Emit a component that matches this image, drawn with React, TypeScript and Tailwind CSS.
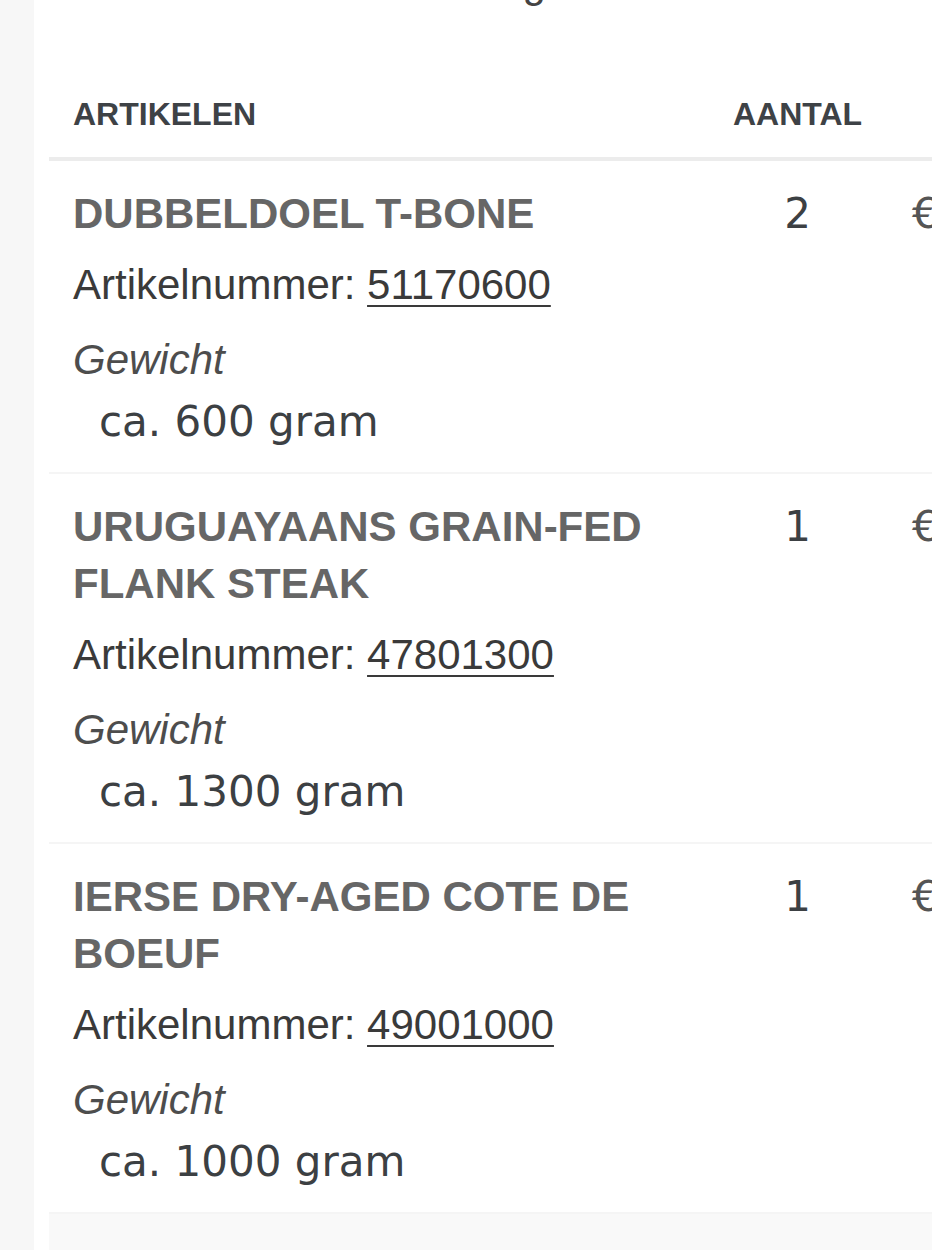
import React from 'react';

interface OrderLine {
  name: string;
  sku: string;
  weight: string;
  qty: number;
  price: string;
}

const lines: OrderLine[] = [
  { name: 'DUBBELDOEL T-BONE', sku: '51170600', weight: 'ca. 600 gram', qty: 2, price: '€ 39,90' },
  { name: 'URUGUAYAANS GRAIN-FED FLANK STEAK', sku: '47801300', weight: 'ca. 1300 gram', qty: 1, price: '€ 42,50' },
  { name: 'IERSE DRY-AGED COTE DE BOEUF', sku: '49001000', weight: 'ca. 1000 gram', qty: 1, price: '€ 54,95' },
];

const sans = "font-['Liberation_Sans',Arial,sans-serif]";
const deja = "font-['DejaVu_Sans',Verdana,sans-serif]";

const LineRow: React.FC<{ line: OrderLine }> = ({ line }) => (
  <div className="grid grid-cols-[651px_195px_220px] border-b-2 border-[#f5f5f5]">
    <div className="pl-[24px] pr-[24px] pt-[24px] pb-[22px] flex flex-col">
      <h3 className={`${sans} text-[42px] leading-[57px] font-bold text-[#666666]`}>{line.name}</h3>
      <p className={`${sans} mt-[14px] text-[42px] leading-[57px] text-[#3a3a3a]`}>
        Artikelnummer: <a href="#" className="underline decoration-2 underline-offset-[6px]">{line.sku}</a>
      </p>
      <p className={`${sans} mt-[18px] text-[42px] leading-[57px] italic text-[#4d4d4d]`}>Gewicht</p>
      <p className={`${deja} mt-[5px] pl-[26px] text-[42px] leading-[57px] text-[#3c4043]`}>{line.weight}</p>
    </div>
    <div className={`${deja} pt-[24px] text-center text-[42px] leading-[57px] text-[#3c4043]`}>{line.qty}</div>
    <div className={`${deja} pt-[24px] pl-[17px] text-[42px] leading-[57px] text-[#555555] whitespace-nowrap`}>{line.price}</div>
  </div>
);

export default function App() {
  return (
    <div className="w-[932px] h-[1250px] overflow-hidden flex bg-white">
      <aside className="w-[34px] shrink-0 bg-[#f7f7f7]" />
      <main className="flex-1 min-w-0 flex flex-col">
        <p className={`${sans} mt-[-38px] h-[42px] leading-[42px] pl-[262px] text-[42px] text-[#444444] whitespace-nowrap`}>
          Uw bestelling
        </p>
        <div className="ml-[15px] pt-[90px] w-[1066px]">
          <div className="grid grid-cols-[651px_195px_220px] border-b-4 border-[#ececec] pb-[23px]">
            <div className={`${sans} pl-[24px] text-[32px] leading-[40px] font-bold text-[#3e4246]`}>ARTIKELEN</div>
            <div className={`${sans} text-center text-[32px] leading-[40px] font-bold text-[#3e4246]`}>AANTAL</div>
            <div />
          </div>
          {lines.map((l) => (
            <LineRow key={l.sku} line={l} />
          ))}
          <div className="h-[200px] bg-[#f9f9f9]" />
        </div>
      </main>
    </div>
  );
}
